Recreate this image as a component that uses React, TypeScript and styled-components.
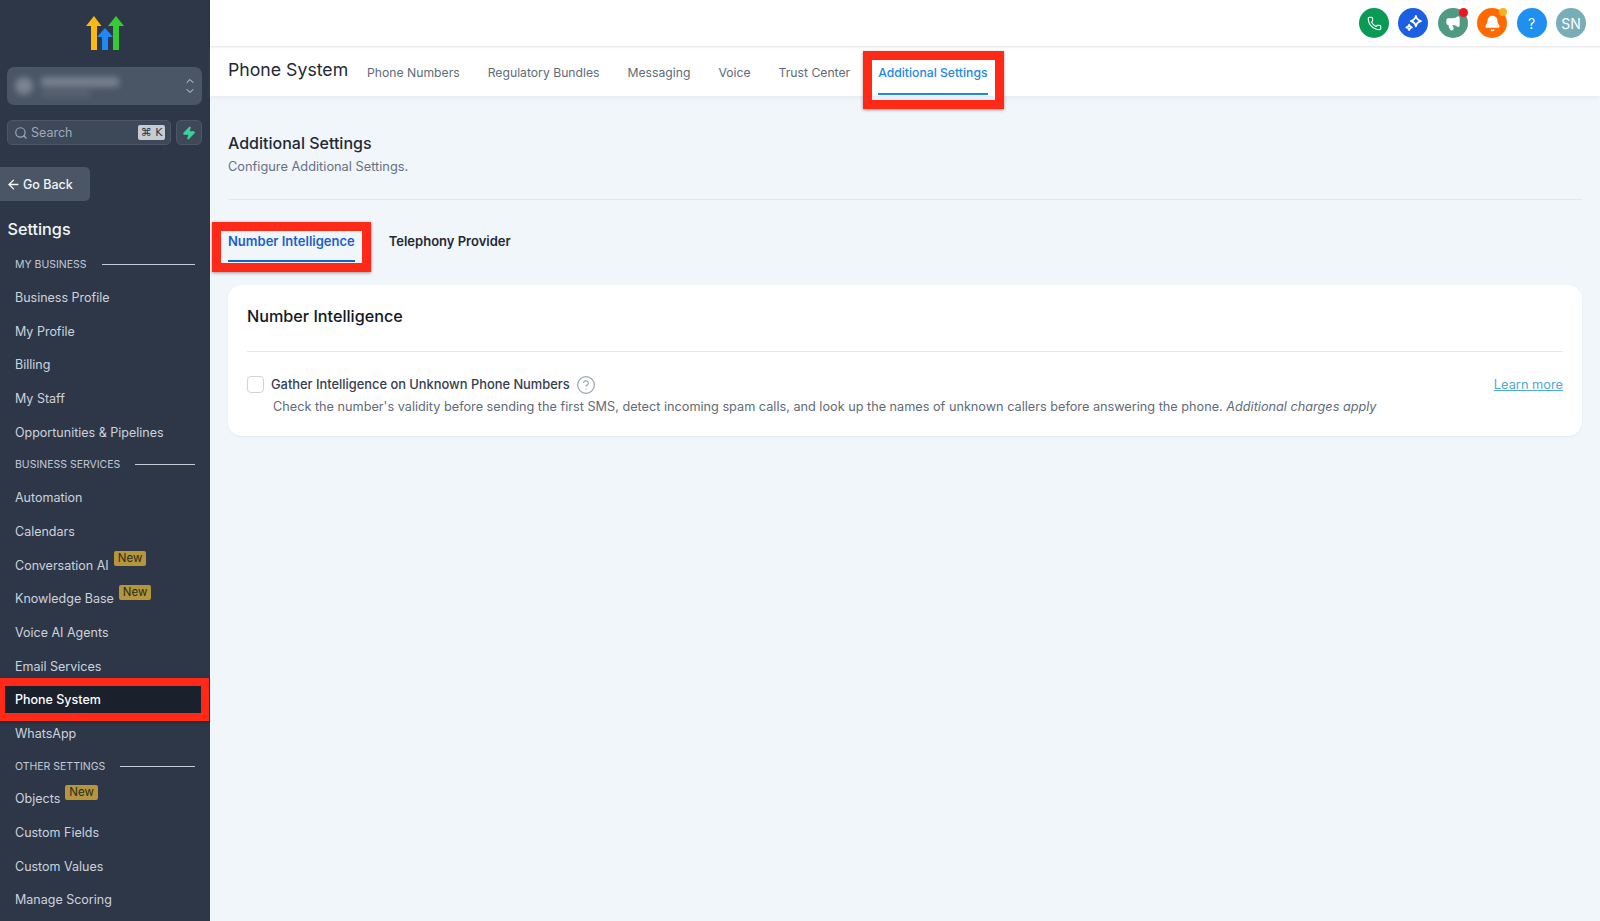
import { ArrowLeft, Bell, ChevronDown, ChevronUp, CircleHelp, Megaphone, Phone, Search, Zap } from 'lucide-react'
import styled, { createGlobalStyle, css } from 'styled-components'

const GlobalStyle = createGlobalStyle`
  html, body {
    margin: 0;
    height: 100%;
    overflow: hidden;
    font-family: Inter, 'Liberation Sans', sans-serif;
    background: #f1f6fa;
  }
  * {
    box-sizing: border-box;
  }
`

const redFrame = css`
  content: '';
  position: absolute;
  border: 9px solid #fe2a17;
  box-shadow: 0 1px 3px rgba(60, 30, 30, 0.45);
  pointer-events: none;
`

const Page = styled.div`
  display: flex;
  width: 1600px;
  height: 921px;
  overflow: hidden;
`
const Sidebar = styled.aside`
  flex: 0 0 210px;
  height: 921px;
  overflow: hidden;
  background: #2d3748;
  display: flex;
  flex-direction: column;
  box-shadow: 1px 0 0 #25303f;
`
const LogoWrap = styled.div`
  display: flex;
  justify-content: center;
  padding-top: 16px;
  height: 67px;
`
const Switcher = styled.div`
  display: flex;
  align-items: center;
  justify-content: space-between;
  margin: 0 8px 0 7px;
  height: 38px;
  padding: 0 6px 0 8px;
  border-radius: 7px;
  background: #4a5565;
  color: #d5dae1;
`
const BlurredName = styled.div`
  display: flex;
  align-items: center;
  gap: 8px;
  filter: blur(3px);
`
const BlurDot = styled.div`
  width: 18px;
  height: 18px;
  border-radius: 50%;
  background: #7b8592;
`
const BlurLines = styled.div`
  display: flex;
  flex-direction: column;
  gap: 4px;
`
const BlurLine = styled.div<{ $w: number; $tone: string }>`
  width: ${(p) => p.$w}px;
  height: ${(p) => (p.$w > 60 ? 10 : 5)}px;
  background: ${(p) => p.$tone};
  border-radius: 3px;
`
const Chevrons = styled.div`
  display: flex;
  flex-direction: column;
  align-items: center;
  svg {
    margin: -1px 0;
  }
`
const SearchRow = styled.div`
  display: flex;
  gap: 5px;
  margin: 15px 8px 0 7px;
`
const SearchBox = styled.div`
  flex: 1;
  height: 25px;
  display: flex;
  align-items: center;
  gap: 3px;
  padding: 0 5px 0 6px;
  background: #3d4859;
  border: 1px solid #4c5667;
  border-radius: 5px;
  color: #a0aab7;
  font-size: 12.5px;
`
const SearchLabel = styled.span`
  flex: 1;
`
const Kbd = styled.span`
  display: inline-flex;
  align-items: center;
  justify-content: center;
  width: 27px;
  height: 15px;
  background: #c7ccd3;
  color: #2d3748;
  border-radius: 2px;
  font-size: 11px;
  font-family: 'DejaVu Sans', sans-serif;
`
const BoltButton = styled.div`
  flex: 0 0 26px;
  height: 25px;
  display: flex;
  align-items: center;
  justify-content: center;
  background: #3d4859;
  border: 1px solid #4c5667;
  border-radius: 5px;
  color: #3fcf9b;
`
const BackButton = styled.div`
  width: 90px;
  height: 34px;
  margin-top: 22px;
  display: flex;
  align-items: center;
  gap: 2px;
  padding-left: 6px;
  background: #4a5565;
  border-radius: 0 5px 5px 0;
  color: #f3f5f7;
  font-size: 12.5px;
  font-weight: 500;
`
const SettingsTitle = styled.div`
  margin: 16px 0 0 7.5px;
  height: 24px;
  line-height: 24px;
  font-size: 16.2px;
  font-weight: 500;
  color: #f4f6f8;
`
const SectionRow = styled.div<{ $first?: boolean }>`
  display: flex;
  align-items: center;
  height: 31.7px;
  margin-top: ${(p) => (p.$first ? '8px' : '0')};
  padding: 0 15px;
  font-size: 10.5px;
  color: #c3cbd6;
  text-transform: uppercase;
  &::after {
    content: '';
    flex: 1;
    height: 1px;
    margin-left: 15px;
    background: #c3cbd6;
  }
`
const Item = styled.div<{ $active?: boolean }>`
  position: relative;
  display: flex;
  align-items: center;
  height: ${(p) => (p.$active ? '27px' : '33.7px')};
  margin: ${(p) => (p.$active ? '3.35px 9px 3.35px 5px' : '0')};
  padding-left: ${(p) => (p.$active ? '10px' : '15px')};
  font-size: 12.5px;
  color: ${(p) => (p.$active ? '#ffffff' : '#cdd3dc')};
  font-weight: ${(p) => (p.$active ? 500 : 400)};
  ${(p) =>
    p.$active &&
    css`
      background: #1a202c;
      box-shadow: 0 0 0 8px #fe2a17, 0 1px 4px 8px rgba(0, 0, 0, 0.3);
    `}
`
const NewBadge = styled.span`
  align-self: flex-start;
  margin: 3px 0 0 5px;
  height: 15px;
  padding: 0 4px;
  display: flex;
  align-items: center;
  background: #b7953a;
  border-radius: 2px;
  color: #26301f;
  font-size: 11.5px;
  line-height: 15px;
`
const Main = styled.main`
  flex: 1;
  min-width: 0;
  display: flex;
  flex-direction: column;
  background: #f1f6fa;
`
const TopBar = styled.header`
  height: 46px;
  background: #fff;
  display: flex;
  align-items: center;
  justify-content: flex-end;
  gap: 9.4px;
  padding: 0 14px 0 0;
  box-shadow: 0 1px 2px rgba(30, 41, 59, 0.14);
  position: relative;
`
const Circle = styled.div<{ $bg: string }>`
  position: relative;
  width: 30px;
  height: 30px;
  border-radius: 50%;
  background: ${(p) => p.$bg};
  display: flex;
  align-items: center;
  justify-content: center;
  color: #fff;
  font-size: 14px;
`
const Dot = styled.span<{ $bg: string; $size: number }>`
  position: absolute;
  top: 0;
  right: 0;
  width: ${(p) => p.$size}px;
  height: ${(p) => p.$size}px;
  border-radius: 50%;
  background: ${(p) => p.$bg};
`
const SubNav = styled.nav`
  height: 50px;
  background: #fff;
  display: flex;
  align-items: flex-start;
  padding-left: 18px;
  box-shadow: 0 2px 5px rgba(148, 163, 184, 0.12);
`
const PageTitle = styled.h1`
  margin: 12px 18px 0 0;
  width: 121px;
  font-size: 17.7px;
  line-height: 24px;
  font-weight: 400;
  color: #1f2937;
  white-space: nowrap;
`
const TopTabs = styled.div`
  display: flex;
  gap: 28px;
`
const TopTab = styled.div<{ $active?: boolean; $marked?: boolean }>`
  position: relative;
  height: 48.5px;
  padding-top: 18px;
  line-height: 18px;
  font-size: 12.2px;
  white-space: nowrap;
  color: ${(p) => (p.$active ? '#1e88e5' : '#5f6b7a')};
  font-weight: ${(p) => (p.$active ? 500 : 400)};
  border-bottom: 2px solid ${(p) => (p.$active ? '#1e88e5' : 'transparent')};
  ${(p) =>
    p.$marked &&
    css`
      &::after {
        ${redFrame}
        inset: 5px -16px -16.5px -15px;
      }
    `}
`
const Content = styled.div`
  flex: 1;
  padding: 34.5px 18px 0;
`
const SectionTitle = styled.h2`
  margin: 0;
  font-size: 16px;
  line-height: 24px;
  font-weight: 500;
  color: #1f2937;
`
const SectionSub = styled.p`
  margin: 1px 0 0;
  font-size: 12.8px;
  line-height: 22px;
  color: #667085;
`
const Divider = styled.hr`
  border: 0;
  height: 1px;
  margin: 21.5px 0 0;
  background: #e4e9ef;
`
const InnerTabs = styled.div`
  display: flex;
  gap: 34px;
  margin-top: 32px;
`
const InnerTab = styled.div<{ $active?: boolean; $marked?: boolean }>`
  position: relative;
  height: 30px;
  line-height: 18px;
  font-size: 13px;
  font-weight: 600;
  white-space: nowrap;
  color: ${(p) => (p.$active ? '#1a5fd0' : '#1f2937')};
  border-bottom: 2px solid ${(p) => (p.$active ? '#1a5fd0' : 'transparent')};
  ${(p) =>
    p.$marked &&
    css`
      &::after {
        ${redFrame}
        inset: -10px -16px -12px -16px;
      }
    `}
`
const Card = styled.section`
  margin-top: 23px;
  height: 151px;
  background: #fff;
  border-radius: 14px;
  padding: 0 19px;
  box-shadow: 0 1px 2px rgba(148, 163, 184, 0.15);
`
const CardTitle = styled.h3`
  margin: 0;
  height: 67px;
  padding-top: 19px;
  font-size: 16.2px;
  line-height: 24px;
  font-weight: 500;
  color: #111827;
  border-bottom: 1px solid #e5e9ee;
`
const OptionRow = styled.div`
  display: flex;
  align-items: center;
  height: 17px;
  margin-top: 24px;
`
const Check = styled.span`
  flex: 0 0 17px;
  height: 17px;
  border: 1px solid #cfd4da;
  border-radius: 4px;
  background: #fff;
`
const OptionLabel = styled.span`
  margin-left: 7px;
  font-size: 12.87px;
  font-weight: 500;
  color: #344054;
`
const HelpIcon = styled.span`
  display: flex;
  margin-left: 6px;
  color: #98a2b3;
`
const LearnMore = styled.a`
  margin-left: auto;
  font-size: 12.8px;
  color: #4fa8d8;
  text-decoration: underline;
`
const OptionDesc = styled.p`
  margin: 5px 0 0 26px;
  font-size: 12.7px;
  line-height: 18px;
  color: #5f6b7a;
  white-space: nowrap;
  em {
    font-style: italic;
  }
`

const GROUPS: { label: string; items: { name: string; isNew?: boolean; active?: boolean }[] }[] = [
  {
    label: 'My Business',
    items: [
      { name: 'Business Profile' },
      { name: 'My Profile' },
      { name: 'Billing' },
      { name: 'My Staff' },
      { name: 'Opportunities & Pipelines' }
    ]
  },
  {
    label: 'Business Services',
    items: [
      { name: 'Automation' },
      { name: 'Calendars' },
      { name: 'Conversation AI', isNew: true },
      { name: 'Knowledge Base', isNew: true },
      { name: 'Voice AI Agents' },
      { name: 'Email Services' },
      { name: 'Phone System', active: true },
      { name: 'WhatsApp' }
    ]
  },
  {
    label: 'Other Settings',
    items: [
      { name: 'Objects', isNew: true },
      { name: 'Custom Fields' },
      { name: 'Custom Values' },
      { name: 'Manage Scoring' }
    ]
  }
]

const TABS = ['Phone Numbers', 'Regulatory Bundles', 'Messaging', 'Voice', 'Trust Center']

function Logo() {
  return (
    <svg width="38" height="34" viewBox="0 0 38 34">
      <path d="M5 34V10H0L8 0l7.500 10H11v24z" fill="#fdb913" />
      <path d="M16 34V21h-5l8-9 8 9h-5v13z" fill="#1e88f5" />
      <path d="M27 34V10h-5l8-10 8 10h-5v24z" fill="#37ca37" />
    </svg>
  )
}

function SparkIcon() {
  return (
    <svg width="19" height="19" viewBox="0 0 24 24" fill="none" stroke="#fff" strokeWidth="2.2" strokeLinejoin="round">
      <path d="M15 2.500c.6 3.700 2.300 5.400 6.500 6.500-4.200 1.100-5.900 2.800-6.500 6.500-.6-3.700-2.300-5.400-6.500-6.500 4.200-1.100 5.900-2.800 6.500-6.500z" />
      <path d="M6.500 13.500c.3 2 1.200 2.900 3.500 3.500-2.300.6-3.200 1.500-3.500 3.500-.3-2-1.200-2.900-3.500-3.500 2.300-.6 3.200-1.500 3.500-3.500z" />
    </svg>
  )
}

export default function App() {
  return (
    <Page>
      <GlobalStyle />
      <Sidebar>
        <LogoWrap>
          <Logo />
        </LogoWrap>
        <Switcher>
          <BlurredName>
            <BlurDot />
            <BlurLines>
              <BlurLine $w={78} $tone="#77818e" />
              <BlurLine $w={50} $tone="#5d6777" />
            </BlurLines>
          </BlurredName>
          <Chevrons>
            <ChevronUp size={12} />
            <ChevronDown size={12} />
          </Chevrons>
        </Switcher>
        <SearchRow>
          <SearchBox>
            <Search size={14} />
            <SearchLabel>Search</SearchLabel>
            <Kbd>⌘ K</Kbd>
          </SearchBox>
          <BoltButton>
            <Zap size={14} fill="currentColor" />
          </BoltButton>
        </SearchRow>
        <BackButton>
          <ArrowLeft size={15} strokeWidth={2.2} />
          Go Back
        </BackButton>
        <SettingsTitle>Settings</SettingsTitle>
        {GROUPS.map((group, i) => (
          <div key={group.label}>
            <SectionRow $first={i === 0}>{group.label}</SectionRow>
            {group.items.map((item) => (
              <Item key={item.name} $active={item.active}>
                {item.name}
                {item.isNew && <NewBadge>New</NewBadge>}
              </Item>
            ))}
          </div>
        ))}
      </Sidebar>
      <Main>
        <TopBar>
          <Circle $bg="#0a9a55">
            <Phone size={15} strokeWidth={1.8} />
          </Circle>
          <Circle $bg="#1c5fe3">
            <SparkIcon />
          </Circle>
          <Circle $bg="#4f9a80">
            <Megaphone size={16} fill="#fff" />
            <Dot $bg="#f0141e" $size={9} />
          </Circle>
          <Circle $bg="#ff6a00">
            <Bell size={17} fill="#fff" />
            <Dot $bg="#f8b31c" $size={8} />
          </Circle>
          <Circle $bg="#1f8ff0">?</Circle>
          <Circle $bg="#78aeb8">SN</Circle>
        </TopBar>
        <SubNav>
          <PageTitle>Phone System</PageTitle>
          <TopTabs>
            {TABS.map((tab) => (
              <TopTab key={tab}>{tab}</TopTab>
            ))}
            <TopTab $active $marked>
              Additional Settings
            </TopTab>
          </TopTabs>
        </SubNav>
        <Content>
          <SectionTitle>Additional Settings</SectionTitle>
          <SectionSub>Configure Additional Settings.</SectionSub>
          <Divider />
          <InnerTabs>
            <InnerTab $active $marked>
              Number Intelligence
            </InnerTab>
            <InnerTab>Telephony Provider</InnerTab>
          </InnerTabs>
          <Card>
            <CardTitle>Number Intelligence</CardTitle>
            <OptionRow>
              <Check />
              <OptionLabel>Gather Intelligence on Unknown Phone Numbers</OptionLabel>
              <HelpIcon>
                <CircleHelp size={20} strokeWidth={1.4} />
              </HelpIcon>
              <LearnMore>Learn more</LearnMore>
            </OptionRow>
            <OptionDesc>
              Check the number's validity before sending the first SMS, detect incoming spam calls, and look up the names
              of unknown callers before answering the phone. <em>Additional charges apply</em>
            </OptionDesc>
          </Card>
        </Content>
      </Main>
    </Page>
  )
}
